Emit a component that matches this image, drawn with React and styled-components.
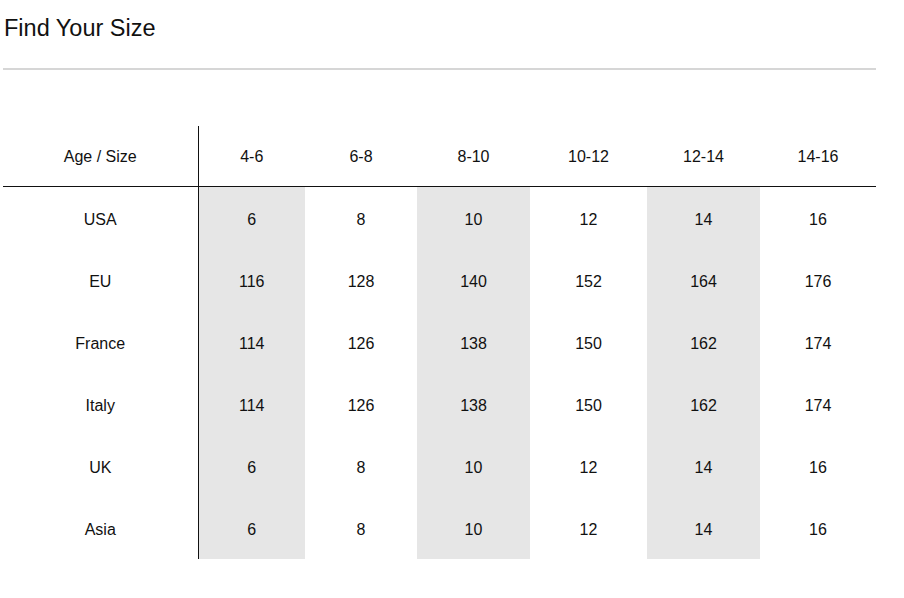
import React from "react";
import styled, { createGlobalStyle } from "styled-components";

const Global = createGlobalStyle`
  html, body { margin: 0; padding: 0; background: #fff; }
  body { font-family: "Liberation Sans", Arial, sans-serif; color: #111; }
`;

const Page = styled.div`
  width: 873px;
  padding: 0 0 0 3px;
`;

const Title = styled.h1`
  margin: 0;
  padding: 15px 0 0 1px;
  font-size: 23.5px;
  line-height: 27px;
  font-weight: 400;
  color: #111;
`;

const Rule = styled.hr`
  margin: 26px 0 0;
  border: 0;
  height: 2px;
  background: #d6d6d6;
`;

const Table = styled.table`
  margin-top: 56px;
  width: 873px;
  border-collapse: collapse;
  table-layout: fixed;
  font-size: 16px;
`;

const HeadCell = styled.th`
  height: 58px;
  padding: 2px 0 0;
  font-weight: 400;
  text-align: center;
  vertical-align: middle;
  border-bottom: 1px solid #111;
  ${(p) => (p.$label ? "border-right: 1px solid #111;" : "")}
`;

const Cell = styled.td`
  height: 59px;
  padding: 3px 0 0;
  text-align: center;
  vertical-align: middle;
  background: ${(p) => (p.$shaded ? "#e6e6e6" : "transparent")};
  ${(p) => (p.$label ? "border-right: 1px solid #111;" : "")}
`;

const widths = [195, 107, 112, 113, 117, 113, 116];
const sizes = ["4-6", "6-8", "8-10", "10-12", "12-14", "14-16"];
const rows = [
  ["USA", "6", "8", "10", "12", "14", "16"],
  ["EU", "116", "128", "140", "152", "164", "176"],
  ["France", "114", "126", "138", "150", "162", "174"],
  ["Italy", "114", "126", "138", "150", "162", "174"],
  ["UK", "6", "8", "10", "12", "14", "16"],
  ["Asia", "6", "8", "10", "12", "14", "16"],
];

export default function App() {
  return (
    <>
      <Global />
      <Page>
        <Title>Find Your Size</Title>
        <Rule />
        <Table>
          <colgroup>
            {widths.map((w, i) => (
              <col key={i} style={{ width: w }} />
            ))}
          </colgroup>
          <thead>
            <tr>
              <HeadCell $label>Age / Size</HeadCell>
              {sizes.map((s) => (
                <HeadCell key={s}>{s}</HeadCell>
              ))}
            </tr>
          </thead>
          <tbody>
            {rows.map((r) => (
              <tr key={r[0]}>
                <Cell $label>{r[0]}</Cell>
                {r.slice(1).map((v, i) => (
                  <Cell key={i} $shaded={i % 2 === 0}>
                    {v}
                  </Cell>
                ))}
              </tr>
            ))}
          </tbody>
        </Table>
      </Page>
    </>
  );
}
